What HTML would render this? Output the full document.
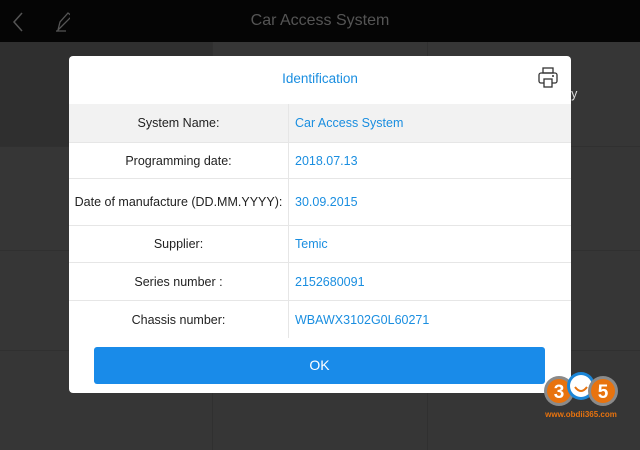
<!DOCTYPE html>
<html><head><meta charset="utf-8"><style>
*{margin:0;padding:0;box-sizing:border-box}
body{width:640px;height:450px;overflow:hidden;background:#363636;font-family:"Liberation Sans",sans-serif;position:relative}
.hdr{position:absolute;left:0;top:0;width:640px;height:42px;background:#050505;color:#555;font-size:16px;text-align:center;line-height:42px}
.vl{position:absolute;top:42px;bottom:0;width:1px;background:#303030}
.hl{position:absolute;height:1px;background:#303030}
.dlg{position:absolute;left:69px;top:56px;width:502px;height:337px;background:#fff;border-radius:4px}
.title{position:absolute;left:0;top:0;width:100%;height:48px;line-height:46px;text-align:center;color:#1a8ee0;font-size:13.5px}
.row{position:absolute;left:0;width:100%;border-top:1px solid #e6e6e6;font-size:12.5px;color:#222}
.row .l{position:absolute;left:0;width:219px;text-align:center}
.row .r{position:absolute;left:226px;color:#1a8ee0}
.div{position:absolute;left:219px;top:48px;width:1px;height:234px;background:#e6e6e6}
.ok{position:absolute;left:25px;top:291px;width:451px;height:37px;background:#198be9;border-radius:3px;color:#fff;text-align:center;line-height:37px;font-size:14px}
</style></head><body>
<div class="hdr">Car Access System</div>
<svg style="position:absolute;left:10px;top:10px" width="60" height="24"><path d="M12 3 L4 12 L12 21" stroke="#555" stroke-width="1.5" fill="none"/><path d="M48 20 L50 12 L58 3 L62 6 L53 15 Z M46 21 L56 21" stroke="#555" stroke-width="1.3" fill="none"/></svg>
<div style="position:absolute;left:0;top:42px;width:212px;height:104px;background:#2f2f2f"></div>
<div class="vl" style="left:212px"></div><div class="vl" style="left:427px"></div>
<div class="hl" style="left:0;width:640px;top:146px"></div>
<div class="hl" style="left:0;width:640px;top:250px"></div>
<div class="hl" style="left:0;width:640px;top:350px"></div>
<div style="position:absolute;left:560px;top:87px;color:#ddd;font-size:12.5px">ory</div>
<div class="dlg">
<div class="title">Identification</div>
<svg style="position:absolute;left:468px;top:10px" width="24" height="24"><rect x="6" y="2" width="10" height="5" fill="none" stroke="#333" stroke-width="1.3"/><rect x="2" y="7" width="18" height="10" rx="2" fill="none" stroke="#333" stroke-width="1.3"/><rect x="7" y="13" width="8" height="8" fill="#fff" stroke="#333" stroke-width="1.3"/><circle cx="16" cy="10" r="1" fill="#333"/></svg>
<div class="row" style="top:48px;height:38px;background:#f2f2f2;border-top:none"><span class="l" style="line-height:38px">System Name:</span><span class="r" style="line-height:38px">Car Access System</span></div>
<div class="row" style="top:86px;height:36px"><span class="l" style="line-height:36px">Programming date:</span><span class="r" style="line-height:36px">2018.07.13</span></div>
<div class="row" style="top:122px;height:47px"><span class="l" style="line-height:47px">Date of manufacture (DD.MM.YYYY):</span><span class="r" style="line-height:47px">30.09.2015</span></div>
<div class="row" style="top:169px;height:37px"><span class="l" style="line-height:37px">Supplier:</span><span class="r" style="line-height:37px">Temic</span></div>
<div class="row" style="top:206px;height:38px"><span class="l" style="line-height:38px">Series number :</span><span class="r" style="line-height:38px">2152680091</span></div>
<div class="row" style="top:244px;height:38px"><span class="l" style="line-height:38px">Chassis number:</span><span class="r" style="line-height:38px">WBAWX3102G0L60271</span></div>
<div class="div"></div>
<div class="ok">OK</div>
</div>
<svg style="position:absolute;left:540px;top:362px" width="82" height="62">
<circle cx="19" cy="29" r="15" fill="#8a8a8a"/><circle cx="19" cy="29" r="12" fill="#e8730e"/>
<circle cx="41" cy="24" r="14" fill="#1b86d8"/><circle cx="41" cy="24" r="11" fill="#fff"/>
<circle cx="63" cy="29" r="15" fill="#8a8a8a"/><circle cx="63" cy="29" r="12" fill="#e8730e"/>
<text x="19" y="36" font-family="Liberation Sans" font-weight="bold" font-size="19" fill="#fff" text-anchor="middle">3</text>
<text x="63" y="36" font-family="Liberation Sans" font-weight="bold" font-size="19" fill="#fff" text-anchor="middle">5</text>
<path d="M35 25 Q41 33 47 25" stroke="#e8730e" stroke-width="2" fill="none"/>
<text x="41" y="55" font-family="Liberation Sans" font-weight="bold" font-size="8" fill="#e8730e" text-anchor="middle">www.obdii365.com</text>
</svg>
</body></html>
